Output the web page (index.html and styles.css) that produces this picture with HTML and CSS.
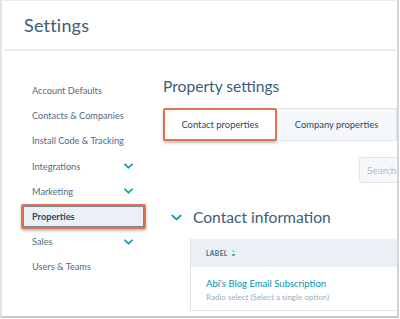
FILE: index.html
```html
<!DOCTYPE html>
<html lang="en">
<head>
    <meta charset="UTF-8">
    <meta name="viewport" content="width=device-width, initial-scale=1.0">
    <title>Settings</title>
    <link rel="stylesheet" href="styles.css">
</head>
<body>
    <div class="frame">
        <div class="header">
            <h1>Settings</h1>
        </div>

        <div class="layout">
            <nav class="sidebar">
                <div class="nav-item">Account Defaults</div>
                <div class="nav-item">Contacts &amp; Companies</div>
                <div class="nav-item">Install Code &amp; Tracking</div>
                <div class="nav-item">Integrations
                    <svg class="chev" viewBox="0 0 10 6" fill="none" stroke="currentColor">
                        <path d="M1 1L5 5L9 1" stroke-width="1.8" stroke-linecap="round" stroke-linejoin="round"/>
                    </svg>
                </div>
                <div class="nav-item">Marketing
                    <svg class="chev" viewBox="0 0 10 6" fill="none" stroke="currentColor">
                        <path d="M1 1L5 5L9 1" stroke-width="1.8" stroke-linecap="round" stroke-linejoin="round"/>
                    </svg>
                </div>
                <div class="nav-item active">Properties</div>
                <div class="nav-item">Sales
                    <svg class="chev" viewBox="0 0 10 6" fill="none" stroke="currentColor">
                        <path d="M1 1L5 5L9 1" stroke-width="1.8" stroke-linecap="round" stroke-linejoin="round"/>
                    </svg>
                </div>
                <div class="nav-item">Users &amp; Teams</div>
            </nav>

            <main class="content">
                <h2>Property settings</h2>

                <div class="tabs">
                    <div class="tab active">Contact properties</div>
                    <div class="tab">Company properties</div>
                </div>

                <div class="search-row">
                    <div class="search">Search</div>
                </div>

                <div class="section-title">
                    <svg class="section-chev" viewBox="0 0 12 7" fill="none" stroke="currentColor">
                        <path d="M1.5 1.5L6 5.5L10.5 1.5" stroke-width="2" stroke-linecap="round" stroke-linejoin="round"/>
                    </svg>
                    <h3>Contact information</h3>
                </div>

                <div class="table">
                    <div class="table-head">
                        LABEL
                        <svg class="sort" viewBox="0 0 6 10">
                            <path d="M3 0.5L5.5 3.5H0.5Z" fill="#b0c1d4"/>
                            <path d="M3 9.5L5.5 6.5H0.5Z" fill="#0091ae"/>
                        </svg>
                    </div>
                    <div class="table-row">
                        <a class="prop-name">Abi's Blog Email Subscription</a>
                        <div class="prop-type">Radio select (Select a single option)</div>
                    </div>
                </div>
            </main>
        </div>
    </div>
</body>
</html>
```

FILE: styles.css
```css
:root {
    --text: #33475b;
    --muted: #516a84;
    --light: #99acc2;
    --teal: #0091ae;
    --orange: #e4704d;
    --panel: #eaf0f6;
    --panel-soft: #f5f8fa;
    --line: #dfe3eb;
}

* {
    margin: 0;
    padding: 0;
    box-sizing: border-box;
}

body {
    font-family: 'Lato', 'Open Sans', sans-serif;
    color: var(--text);
    background: #fff;
    width: 400px;
    height: 319px;
    overflow: hidden;
}

.frame {
    width: 399px;
    height: 318px;
    border-top: 1px solid #ececec;
    border-left: 2px solid #e2e2e2;
    border-right: 2px solid #d4d4d4;
    border-bottom: 2px solid #c8c8c8;
    overflow: hidden;
}

.header {
    height: 50px;
    padding: 13px 0 0 20px;
    border-bottom: 2px solid #ecedf2;
    margin: 0 1px 0 2px;
}

h1 {
    font-size: 18px;
    font-weight: 400;
    color: #425b76;
    letter-spacing: 0.2px;
}

.layout {
    display: flex;
}

.sidebar {
    width: 161px;
    flex: 0 0 161px;
    padding: 27px 17px 0 19px;
}

.nav-item {
    display: flex;
    align-items: center;
    justify-content: space-between;
    height: 25.2px;
    padding: 0 13px 0 11px;
    font-size: 9.2px;
    color: var(--muted);
}

.nav-item.active {
    padding-left: 9px;
    font-weight: 700;
    color: var(--text);
    background: var(--panel);
    border: 2.5px solid var(--orange);
    border-radius: 2px;
    box-shadow: inset 0 0 0 1px #7d8896, 0 2px 3px rgba(0, 0, 0, 0.25);
}

.chev {
    width: 9px;
    height: 6px;
    color: var(--teal);
}

.content {
    flex: 1;
    padding-top: 25px;
}

h2 {
    font-size: 15.6px;
    font-weight: 400;
    color: #425b76;
    line-height: 20px;
}

.tabs {
    display: flex;
    margin-top: 12px;
    height: 33px;
}

.tab {
    display: flex;
    align-items: center;
    justify-content: center;
    font-size: 9.4px;
    color: var(--text);
    background: var(--panel-soft);
    border: 1px solid var(--line);
    border-left: none;
    flex: 1;
}

.tab.active {
    flex: 0 0 114px;
    background: #fff;
    border: 2.5px solid var(--orange);
    border-radius: 2px;
    box-shadow: 0 2px 3px rgba(0, 0, 0, 0.25);
}

.search-row {
    display: flex;
    justify-content: flex-end;
    margin-top: 16px;
}

.search {
    width: 38px;
    height: 26px;
    padding: 6px 0 0 7px;
    font-size: 10px;
    color: #b0bccb;
    background: var(--panel-soft);
    border: 1px solid var(--line);
    border-right: none;
    border-radius: 3px 0 0 3px;
}

.section-title {
    display: flex;
    align-items: center;
    margin-top: 22px;
    padding-left: 8px;
    height: 24px;
}

.section-chev {
    width: 11px;
    height: 7px;
    color: var(--teal);
    margin-right: 11px;
}

h3 {
    font-size: 15.6px;
    font-weight: 400;
    color: #425b76;
}

.table {
    margin: 10px 0 0 27px;
    border-left: 1px solid var(--line);
    border-bottom: 1px solid var(--line);
}

.table-head {
    display: flex;
    align-items: center;
    gap: 3px;
    height: 28px;
    padding-left: 15px;
    background: var(--panel);
    font-size: 6.8px;
    font-weight: 700;
    letter-spacing: 0.3px;
    color: var(--muted);
}

.sort {
    width: 5px;
    height: 8px;
}

.table-row {
    padding: 11px 0 8px 15px;
}

.prop-name {
    display: block;
    font-size: 9.5px;
    color: var(--teal);
}

.prop-type {
    margin-top: 3px;
    font-size: 8px;
    color: var(--light);
}
```
